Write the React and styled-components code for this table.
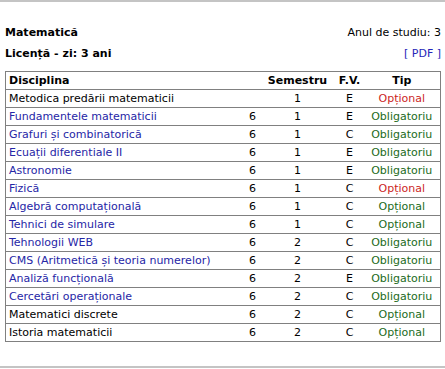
import React from "react";
import styled, { createGlobalStyle } from "styled-components";

const Global = createGlobalStyle`
  html, body { margin: 0; padding: 0; background: #fff; }
  body { font-family: "DejaVu Sans", Verdana, sans-serif; font-size: 11px; color: #000; }
`;

const Page = styled.div`
  width: 445px;
  height: 369px;
  overflow: hidden;
`;

const Rule = styled.div`
  height: 2px;
  background: #c4c4c4;
  margin: ${(p) => p.$margin || "0"};
`;

const Content = styled.div`
  padding: 24px 4px 0 5px;
`;

const InfoRow = styled.div`
  display: flex;
  justify-content: space-between;
  align-items: baseline;
  height: 21px;
`;

const Strong = styled.span`
  font-weight: bold;
`;

const PdfLink = styled.a`
  color: #2626b8;
  text-decoration: none;
`;

const Table = styled.table`
  margin-top: 3px;
  width: 436px;
  table-layout: fixed;
  border-collapse: collapse;
  border: 1px solid #808080;
`;

const Th = styled.th`
  font-weight: bold;
  text-align: ${(p) => p.$align || "center"};
  padding: ${(p) => (p.$align === "left" ? "0 0 0 3px" : "0")};
  height: 17px;
  border-bottom: 1px solid #808080;
  white-space: nowrap;
`;

const Td = styled.td`
  text-align: ${(p) => p.$align || "center"};
  padding: ${(p) => (p.$align === "left" ? "0 0 0 3px" : "0")};
  height: 17px;
  border-bottom: 1px solid #808080;
  color: ${(p) => p.$color || "#000"};
  white-space: nowrap;
`;

const colors = {
  link: "#2626a6",
  red: "#cc1f1f",
  green: "#226b22",
};

const rows = [
  ["Metodica predării matematicii", false, "", "1", "E", "Opțional", "red"],
  ["Fundamentele matematicii", true, "6", "1", "E", "Obligatoriu", "green"],
  ["Grafuri și combinatorică", true, "6", "1", "C", "Obligatoriu", "green"],
  ["Ecuații diferentiale II", true, "6", "1", "E", "Obligatoriu", "green"],
  ["Astronomie", true, "6", "1", "E", "Obligatoriu", "green"],
  ["Fizică", true, "6", "1", "C", "Opțional", "red"],
  ["Algebră computațională", true, "6", "1", "C", "Opțional", "green"],
  ["Tehnici de simulare", true, "6", "1", "C", "Opțional", "green"],
  ["Tehnologii WEB", true, "6", "2", "C", "Obligatoriu", "green"],
  ["CMS (Aritmetică și teoria numerelor)", true, "6", "2", "C", "Obligatoriu", "green"],
  ["Analiză funcțională", true, "6", "2", "E", "Obligatoriu", "green"],
  ["Cercetări operaționale", true, "6", "2", "C", "Obligatoriu", "green"],
  ["Matematici discrete", false, "6", "2", "C", "Opțional", "green"],
  ["Istoria matematicii", false, "6", "2", "C", "Opțional", "green"],
];

export default function App() {
  return (
    <Page>
      <Global />
      <Rule />
      <Content>
        <InfoRow>
          <Strong>Matematică</Strong>
          <span>Anul de studiu: 3</span>
        </InfoRow>
        <InfoRow>
          <Strong>Licență - zi: 3 ani</Strong>
          <PdfLink href="#">[ PDF ]</PdfLink>
        </InfoRow>
        <Table>
          <colgroup>
            <col />
            <col width="14" />
            <col width="76" />
            <col width="28" />
            <col width="77" />
          </colgroup>
          <thead>
            <tr>
              <Th $align="left">Disciplina</Th>
              <Th></Th>
              <Th>Semestru</Th>
              <Th>F.V.</Th>
              <Th>Tip</Th>
            </tr>
          </thead>
          <tbody>
            {rows.map(([name, link, cr, sem, fv, tip, tc]) => (
              <tr key={name}>
                <Td $align="left" $color={link ? colors.link : "#000"}>{name}</Td>
                <Td>{cr}</Td>
                <Td>{sem}</Td>
                <Td>{fv}</Td>
                <Td $color={colors[tc]}>{tip}</Td>
              </tr>
            ))}
          </tbody>
        </Table>
        <Rule $margin="24px -4px 0 -5px" />
      </Content>
    </Page>
  );
}
